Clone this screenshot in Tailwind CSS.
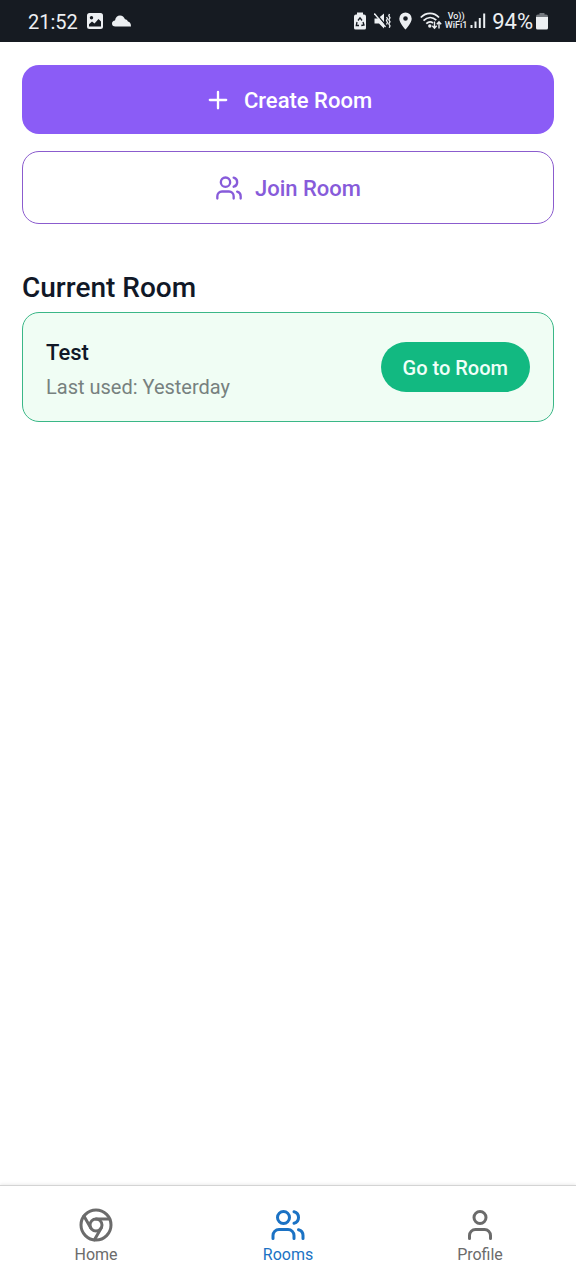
<!DOCTYPE html>
<html lang="en">
<head>
<meta charset="utf-8">
<meta name="viewport" content="width=device-width, initial-scale=1">
<title>Rooms</title>
<script src="https://cdn.jsdelivr.net/npm/@tailwindcss/browser@4"></script>
</head>
<body class="flex min-h-screen flex-col bg-white font-['Roboto','Noto_Sans',sans-serif] text-[#111827]">
  <header class="flex h-[42px] items-center justify-between bg-[#161b22] px-7 text-[#eceff2]">
    <div class="flex items-center gap-2">
      <span class="pt-px text-xl">21:52</span>
      <svg class="size-[18px]" viewBox="0 0 18 18" aria-hidden="true"><rect x="1" y="1" width="16" height="16" rx="2.5" fill="currentColor"/><circle cx="5.5" cy="5.8" r="1.7" fill="#161b22"/><path d="M3 14.500v-2.300l3-2.700 2.500 2 4-4.500 2.500 2.500v5z" fill="#161b22"/></svg>
      <svg class="h-[18px] w-5" viewBox="0 0 20 18" aria-hidden="true"><path d="M3.500 14.500C1 14.500 0 13.300 0 11.500 0 9.700 1.300 8.500 3 8.400 3.500 5 5.500 3.500 8 3.500c2.500 0 4 1.500 5 3.700 1.500 0 2.600 1 2.900 2.400 1.900.3 3.100 1.800 3.100 4.900z" fill="currentColor"/></svg>
    </div>
    <div class="flex items-center">
      <svg class="mr-2 h-[18px] w-3" viewBox="0 0 12 18" aria-hidden="true"><path d="M3 .5h6v2h1a2 2 0 0 1 2 2V16a1.500 1.500 0 0 1-1.500 1.500h-9A1.500 1.500 0 0 1 0 16V4.500a2 2 0 0 1 2-2h1z" fill="currentColor"/><path d="M4 8.500 6 5.800l2 2.700M9 10l1 3-2.700.5M5 13.500H2.300L3 10" fill="none" stroke="#161b22" stroke-width="1.300"/></svg>
      <svg class="mr-2 h-[18px] w-[17px]" viewBox="0 0 17 18" aria-hidden="true"><path d="M.5 6.500H4L10 1.500v15l-5-5H.5z" fill="currentColor"/><path d="M1.500 1 12 13.500" stroke="#161b22" stroke-width="1.300"/><path d="M.3 1.500 11.500 15" stroke="currentColor" stroke-width="1.400"/><path d="m12.500 5 1 1.500-1 2 1 2-1 2M15.500 2l-.7 1.800 1.200 2-1.200 2 1.200 2-1.200 2 1.200 2-.7 2" fill="none" stroke="currentColor" stroke-width="1.300"/></svg>
      <svg class="mr-2 h-[18px] w-[13px]" viewBox="0 0 13 18" aria-hidden="true"><path fill-rule="evenodd" d="M6.500.5A6.200 6.200 0 0 0 .3 6.700C.3 11 6.500 17.500 6.500 17.500s6.200-6.500 6.200-10.800A6.200 6.200 0 0 0 6.500.5m0 3.700a2.300 2.300 0 1 1 0 4.600 2.300 2.300 0 0 1 0-4.600" fill="currentColor"/></svg>
      <svg class="mr-1 h-[18px] w-[22px]" viewBox="0 0 22 18" aria-hidden="true"><g fill="none" stroke="currentColor" stroke-width="1.800"><path d="M.8 5.500C6 0 14 0 19 5.500M3.500 8.700c4-4 9-4 12.800-.5M6.300 11.700c2-2 4.700-2.200 6.700-.8"/></g><circle cx="9.800" cy="14" r="1.700" fill="currentColor"/><path d="M14.500 9.500V16M12.300 13.800l2.200 2.500 2.200-2.500M19 16.500V10M16.800 12.200 19 9.700l2.200 2.500" fill="none" stroke="currentColor" stroke-width="1.400"/></svg>
      <div class="mr-1 flex w-5 flex-col items-center text-[9px] leading-[9px] font-medium"><span>Vo))</span><span>WiFi1</span></div>
      <svg class="mr-[6px] h-[18px] w-4" viewBox="0 0 16 18" aria-hidden="true"><path d="M1.500 13v3M5.500 9.500V16M9.800 6v10M14.200 1.500V16" stroke="currentColor" stroke-width="2"/></svg>
      <span class="mr-[3px] pt-px text-[22px]">94%</span>
      <svg class="h-[18px] w-3" viewBox="0 0 12 18" aria-hidden="true"><path d="M3.500 1h5v1.500H10a2 2 0 0 1 2 2V6H0V4.500a2 2 0 0 1 2-2h1.500z" fill="#74797f"/><path d="M0 5h12v11a1.500 1.500 0 0 1-1.500 1.500h-9A1.500 1.500 0 0 1 0 16z" fill="currentColor"/></svg>
    </div>
  </header>

  <main class="flex flex-1 flex-col px-[22px] pt-[23px]">
    <button type="button" class="flex h-[69px] items-center justify-center gap-3 rounded-[17px] bg-[#8b5cf6] text-[22px] font-medium text-white">
      <svg class="size-7" viewBox="0 0 24 24" fill="none" stroke="currentColor" stroke-width="2" stroke-linecap="round" aria-hidden="true"><path d="M5 12h14M12 5v14"/></svg>
      <span class="pt-[2px]">Create Room</span>
    </button>
    <button type="button" class="mt-[17px] flex h-[73px] items-center justify-center gap-3 rounded-[17px] border border-[#8b5cce] bg-white text-[22px] font-medium text-[#875bda]">
      <svg class="size-7" viewBox="0 0 24 24" fill="none" stroke="currentColor" stroke-width="2" stroke-linecap="round" stroke-linejoin="round" aria-hidden="true"><path d="M16 21v-2a4 4 0 0 0-4-4H6a4 4 0 0 0-4 4v2"/><circle cx="9" cy="7" r="4"/><path d="M22 21v-2a4 4 0 0 0-3-3.870M16 3.130a4 4 0 0 1 0 7.750"/></svg>
      <span class="pt-[2px]">Join Room</span>
    </button>

    <h1 class="mt-11 mb-1 text-[28px] leading-10 font-medium">Current Room</h1>
    <section class="flex h-[110px] items-center justify-between rounded-[17px] border border-[#3ab787] bg-[#f0fdf4] px-[23px]">
      <div class="pt-[3px]">
        <h2 class="text-[22px] leading-9 font-medium">Test</h2>
        <p class="text-xl leading-8 text-[#77817f]">Last used: Yesterday</p>
      </div>
      <button type="button" class="h-[50px] rounded-full bg-[#12b981] px-[22px] pt-[2px] text-xl font-medium text-[#f0fff8]">Go to Room</button>
    </section>
  </main>

  <nav class="grid h-[95px] grid-cols-3 border-t border-[#d4d4d4] bg-white pt-[21px] text-base text-[#6b6b6b] shadow-[0_-1px_3px_rgba(0,0,0,0.08)]" aria-label="Main">
    <a href="#home" class="flex flex-col items-center">
      <svg class="size-[36px]" viewBox="0 0 24 24" fill="none" stroke="currentColor" stroke-width="2" stroke-linecap="round" aria-hidden="true"><circle cx="12" cy="12" r="10"/><circle cx="12" cy="12" r="4"/><path d="M21.170 8H12M3.950 6.060 8.540 14M10.880 21.940 15.460 14"/></svg>
      <span>Home</span>
    </a>
    <a href="#rooms" class="flex flex-col items-center text-[#1b72c4]" aria-current="page">
      <svg class="size-[36px]" viewBox="0 0 24 24" fill="none" stroke="currentColor" stroke-width="2" stroke-linecap="round" stroke-linejoin="round" aria-hidden="true"><path d="M16 21v-2a4 4 0 0 0-4-4H6a4 4 0 0 0-4 4v2"/><circle cx="9" cy="7" r="4"/><path d="M22 21v-2a4 4 0 0 0-3-3.870M16 3.130a4 4 0 0 1 0 7.750"/></svg>
      <span>Rooms</span>
    </a>
    <a href="#profile" class="flex flex-col items-center">
      <svg class="size-[36px]" viewBox="0 0 24 24" fill="none" stroke="currentColor" stroke-width="2" stroke-linecap="round" stroke-linejoin="round" aria-hidden="true"><path d="M19 21v-2a4 4 0 0 0-4-4H9a4 4 0 0 0-4 4v2"/><circle cx="12" cy="7" r="4"/></svg>
      <span>Profile</span>
    </a>
  </nav>
</body>
</html>
